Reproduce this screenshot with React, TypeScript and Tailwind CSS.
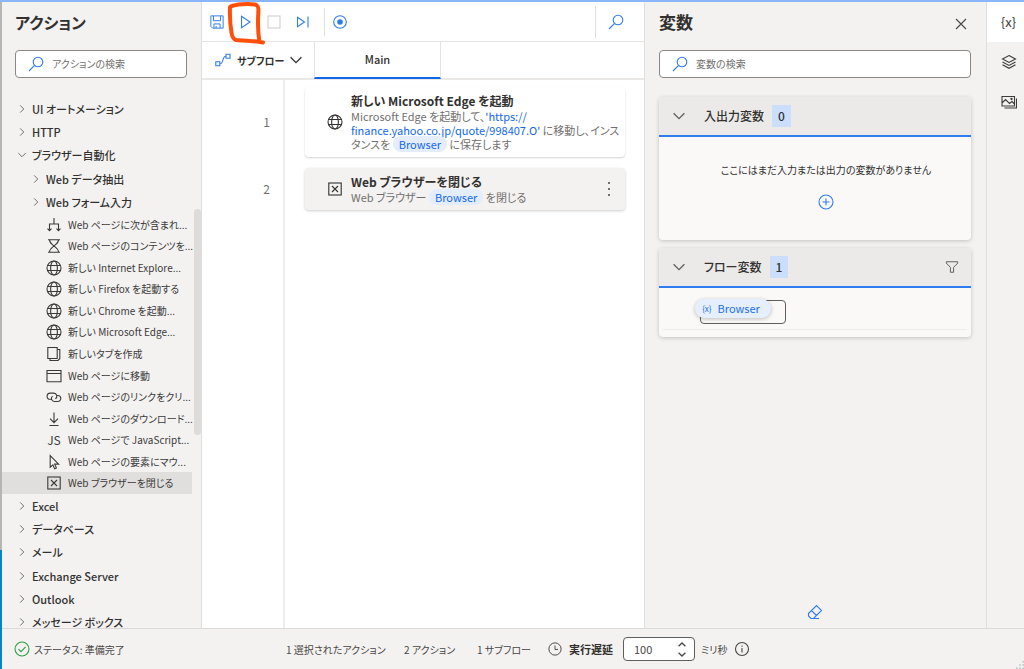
import { useState } from 'react';
import type { ReactNode } from 'react';

type IconProps = { className?: string };

const svgBase = {
  fill: 'none',
  stroke: 'currentColor',
  strokeWidth: 1.1,
  viewBox: '0 0 16 16',
  'aria-hidden': true,
} as const;

const GlobeIcon = ({ className = 'size-4' }: IconProps) => (
  <svg {...svgBase} className={className}>
    <circle cx="8" cy="8" r="7" />
    <ellipse cx="8" cy="8" rx="3.4" ry="7" />
    <path d="M1.6 5.5h12.8M1.6 10.5h12.8" />
  </svg>
);

const CloseBoxIcon = ({ className = 'size-4' }: IconProps) => (
  <svg {...svgBase} className={className}>
    <rect x="1.8" y="2" width="12.4" height="12" />
    <path d="M5 5l6 6M11 5l-6 6" />
  </svg>
);

const BranchIcon = () => (
  <svg {...svgBase} className="size-4">
    <path d="M8 1v6M3.5 13.500V7h9v6.500M1.500 11.700l2 2 2-2M10.500 11.700l2 2 2-2" />
  </svg>
);

const HourglassIcon = () => (
  <svg {...svgBase} className="size-4">
    <path d="M2 1.8h12M2 14.2h12M3.5 1.8c0 3.500 3 5 4.500 6.200-1.500 1.200-4.500 2.700-4.500 6.200M12.500 1.800c0 3.500-3 5-4.500 6.200 1.500 1.200 4.500 2.700 4.500 6.200" />
  </svg>
);

const TabsIcon = () => (
  <svg {...svgBase} className="size-4">
    <path d="M1.800 1.500h9.400v11H1.800zM11.200 3.500h2.600v9.200l-1.800 1.800H4v-2" />
  </svg>
);

const WindowIcon = () => (
  <svg {...svgBase} className="size-4">
    <path d="M1 2.500h14v11.200H1zM1 5.500h14" />
  </svg>
);

const LinkIcon = () => (
  <svg {...svgBase} className="size-4">
    <path d="M6 10.300H4.200a3.100 3.100 0 0 1 0-6.200h3.600a3.100 3.100 0 0 1 1.600 5.700" />
    <path d="M10.800 6.500h1a3 3 0 0 1 0 6H8.400a3 3 0 0 1-1.800-5.400" />
  </svg>
);

const DownloadIcon = () => (
  <svg {...svgBase} className="size-4">
    <path d="M8 1.500v10M4 7.700l4 4 4-4M3.500 14.500h9" />
  </svg>
);

const CursorIcon = () => (
  <svg {...svgBase} className="size-4">
    <path d="M4.200 1.500v11.700l2.700-2.400 1.700 3.900 1.800-.8-1.700-3.800h3.900z" />
  </svg>
);

const ScriptIcon = () => <span className="text-xs leading-4">JS</span>;

const Chevron = ({ open = false, className = 'size-2' }: IconProps & { open?: boolean }) => (
  <svg viewBox="0 0 10 10" fill="none" stroke="currentColor" strokeWidth="1.100" aria-hidden className={className}>
    <path d={open ? 'M.5 2.700L5 7.200l4.500-4.500' : 'M2.700.5L7.200 5 2.700 9.500'} />
  </svg>
);

const SearchIcon = ({ className = 'size-4' }: IconProps) => (
  <svg {...svgBase} className={className}>
    <circle cx="10" cy="6" r="4.800" />
    <path d="M6.600 9.400L1 15" />
  </svg>
);

type Action = { label: string; icon: ReactNode };

const actions: Action[] = [
  { label: 'Web ページに次が含まれ...', icon: <BranchIcon /> },
  { label: 'Web ページのコンテンツを...', icon: <HourglassIcon /> },
  { label: '新しい Internet Explore...', icon: <GlobeIcon /> },
  { label: '新しい Firefox を起動する', icon: <GlobeIcon /> },
  { label: '新しい Chrome を起動...', icon: <GlobeIcon /> },
  { label: '新しい Microsoft Edge...', icon: <GlobeIcon /> },
  { label: '新しいタブを作成', icon: <TabsIcon /> },
  { label: 'Web ページに移動', icon: <WindowIcon /> },
  { label: 'Web ページのリンクをクリ...', icon: <LinkIcon /> },
  { label: 'Web ページのダウンロード...', icon: <DownloadIcon /> },
  { label: 'Web ページで JavaScript...', icon: <ScriptIcon /> },
  { label: 'Web ページの要素にマウ...', icon: <CursorIcon /> },
  { label: 'Web ブラウザーを閉じる', icon: <CloseBoxIcon /> },
];

const upperGroups = [
  { label: 'UI オートメーション', open: false, nested: false },
  { label: 'HTTP', open: false, nested: false },
  { label: 'ブラウザー自動化', open: true, nested: false },
  { label: 'Web データ抽出', open: false, nested: true },
  { label: 'Web フォーム入力', open: false, nested: true },
];

const lowerGroups = ['Excel', 'データベース', 'メール', 'Exchange Server', 'Outlook', 'メッセージ ボックス'];

function GroupRow({ label, open = false, nested = false }: { label: string; open?: boolean; nested?: boolean }) {
  return (
    <li className={nested ? 'flex items-center pl-[30px]' : 'flex items-center pl-4'}>
      <button type="button" aria-expanded={open} className="flex items-center gap-1.5 whitespace-nowrap text-[11px] leading-4 font-medium">
        <span className="flex w-2 justify-center text-[#605e5c]">
          <Chevron open={open} />
        </span>
        {label}
      </button>
    </li>
  );
}

function SearchField({ id, label }: { id: string; label: string }) {
  return (
    <div className="flex h-7 items-center gap-2 rounded-sm border border-[#8a8886] bg-white pl-3">
      <label htmlFor={id} aria-label={label} className="shrink-0 text-[#2f7bf0]">
        <SearchIcon />
      </label>
      <input
        id={id}
        type="search"
        placeholder={label}
        className="min-w-0 flex-1 bg-transparent text-[10px] leading-4 outline-none placeholder:text-[#72706e]"
      />
    </div>
  );
}

function ActionsPanel() {
  return (
    <aside className="relative flex w-[200px] shrink-0 flex-col overflow-hidden border-r border-[#e1dfdd]">
      <div className="pt-1.5 pr-3.5 pb-[19px] pl-[13px]">
        <h2 className="mb-3.5 text-base leading-7 font-semibold">アクション</h2>
        <SearchField id="action-search" label="アクションの検索" />
      </div>
      <nav aria-label="アクション" className="shrink-0">
        <ul className="grid h-[117px] auto-rows-fr">
          {upperGroups.map((g) => (
            <GroupRow key={g.label} {...g} />
          ))}
        </ul>
        <ul className="mr-[9px] grid h-[280px] auto-rows-fr grid-cols-1">
          {actions.map((a, i) => (
            <li key={a.label} className={i === actions.length - 1 ? 'flex items-center bg-[#e1dfdd] pl-11' : 'flex items-center pl-11'}>
              <button type="button" className="flex items-center gap-1.5 text-[10px] leading-4 whitespace-nowrap text-[#3b3a39]">
                <span className="flex w-4 shrink-0 justify-center">{a.icon}</span>
                {a.label}
              </button>
            </li>
          ))}
        </ul>
        <ul className="grid h-[140px] auto-rows-fr">
          {lowerGroups.map((g) => (
            <GroupRow key={g} label={g} />
          ))}
        </ul>
      </nav>
      <div className="absolute top-[207px] right-0 h-[226px] w-[7px] rounded-full bg-[#dedcda]" />
    </aside>
  );
}

function Toolbar() {
  return (
    <div className="relative flex h-10 shrink-0 items-center border-b border-[#e6e4e2] pl-[5px] text-[#2f7bf0]">
      <button type="button" aria-label="保存" className="flex w-[30px] pl-[3px]">
        <svg {...svgBase} className="size-3.5">
          <path d="M1 1h14v14H3l-2-2zM4 1v5.500h8V1M4.500 15v-4.800h7V15M7 15v-2.500" />
        </svg>
      </button>
      <button type="button" aria-label="実行" className="flex w-[28px] pl-px">
        <svg {...svgBase} className="size-4">
          <path d="M3.500 2.200L12 8l-8.500 5.800z" />
        </svg>
      </button>
      <button type="button" aria-label="停止" disabled className="flex w-[29px] pl-px text-[#d2d0ce]">
        <svg {...svgBase} className="size-4">
          <rect x="2" y="2" width="12" height="12" />
        </svg>
      </button>
      <button type="button" aria-label="次のアクションを実行" className="flex w-[30px] pl-px">
        <svg {...svgBase} className="size-4">
          <path d="M2.500 3.200L9.500 8l-7 4.800zM13 2.500v11" />
        </svg>
      </button>
      <span className="h-7 w-px bg-[#e1dfdd]" />
      <button type="button" aria-label="レコーダー" className="ml-[7px] flex">
        <svg {...svgBase} className="size-4">
          <circle cx="8" cy="8" r="6.300" />
          <circle cx="8" cy="8" r="2.800" fill="currentColor" stroke="none" />
        </svg>
      </button>
      <span className="ml-auto h-8 w-px bg-[#e1dfdd]" />
      <button type="button" aria-label="フロー内を検索" className="flex w-12 justify-center pr-2">
        <SearchIcon />
      </button>
      <svg viewBox="0 0 42 46" fill="none" aria-hidden className="pointer-events-none absolute top-0 left-6 h-[46px] w-[42px]">
        <path
          d="M4 5c-.3 8 0 17 1.500 26 .6 3.600 1.500 6 4.500 7 7 .6 17 .6 27 2.500M4.500 4.500C10 2 22 1.500 29 2.500c3 .8 3.600 2.500 3.400 7-.6 9-.6 21 1 30"
          stroke="#ff4f0a"
          strokeWidth="4"
          strokeLinecap="round"
          strokeLinejoin="round"
        />
      </svg>
    </div>
  );
}

function Pill({ children }: { children: ReactNode }) {
  return <span className="rounded-full bg-[#e3edfd] px-1.5 text-[#1267f2]">{children}</span>;
}

function FlowCard({ icon, title, selected = false, children }: { icon: ReactNode; title: string; selected?: boolean; children: ReactNode }) {
  return (
    <article
      className={
        selected
          ? 'flex flex-1 items-center rounded-sm bg-[#f3f2f1] pl-[22px] shadow-[0_1px_3px_rgba(0,0,0,0.200)]'
          : 'flex flex-1 items-center rounded-sm bg-white pl-[22px] shadow-[0_1px_2px_rgba(0,0,0,0.180)]'
      }
    >
      <span className="shrink-0">{icon}</span>
      <div className="min-w-0 flex-1 pl-2">
        <h3 className="text-xs leading-4 font-semibold">{title}</h3>
        <p className="text-[11px] leading-[14px] text-[#72706e]">{children}</p>
      </div>
      {selected && (
        <button type="button" aria-label="その他の操作" className="flex w-8 shrink-0 justify-center">
          <svg viewBox="0 0 16 16" fill="currentColor" aria-hidden className="size-4 text-[#484644]">
            <circle cx="8" cy="2" r="1" />
            <circle cx="8" cy="8" r="1" />
            <circle cx="8" cy="14" r="1" />
          </svg>
        </button>
      )}
    </article>
  );
}

function FlowEditor() {
  return (
    <main className="flex min-w-0 flex-1 flex-col bg-white">
      <Toolbar />
      <div className="flex h-[38px] shrink-0 border-b-2 border-[#ebe9e8]">
        <button type="button" className="flex w-28 shrink-0 items-center gap-1.5 pl-[13px] text-[10px] font-semibold whitespace-nowrap">
          <svg {...svgBase} className="size-4 shrink-0 text-[#2f7bf0]">
            <path d="M.8 9.800h4v4h-4zM11 2.200h4v4h-4zM4.800 11.800c4.500 0 1.700-7.600 6.200-7.600" />
          </svg>
          サブフロー
          <Chevron open className="mr-3 ml-auto size-3 shrink-0" />
        </button>
        <button type="button" className="-mb-px w-[127px] border-x border-b-2 border-x-[#e6e4e2] border-b-[#1267e8] text-[11px] font-medium">
          Main
        </button>
      </div>
      <div className="flex min-h-0 flex-1">
        <div className="flex w-[83px] shrink-0 flex-col gap-[11px] border-r-2 border-[#eeedec] pt-[7px] text-right text-xs text-[#72706e]">
          <span className="flex h-[70px] items-center justify-end pr-[13px]">1</span>
          <span className="flex h-[42px] items-center justify-end pr-[13px]">2</span>
        </div>
        <div className="flex min-w-0 flex-1 flex-col gap-[11px] pt-[7px] pr-[19px] pl-5">
          <div className="flex h-[70px]">
            <FlowCard icon={<GlobeIcon />} title="新しい Microsoft Edge を起動">
              Microsoft Edge を起動して、<span className="text-[#1267f2]">'https://<br />finance.yahoo.co.jp/quote/998407.O'</span> に移動し、インス
              <br />
              タンスを <Pill>Browser</Pill> に保存します
            </FlowCard>
          </div>
          <div className="flex h-[42px]">
            <FlowCard icon={<CloseBoxIcon />} title="Web ブラウザーを閉じる" selected>
              Web ブラウザー <Pill>Browser</Pill> を閉じる
            </FlowCard>
          </div>
        </div>
      </div>
    </main>
  );
}

function VariableSection({ title, count, filter = false, children }: { title: string; count: number; filter?: boolean; children: ReactNode }) {
  return (
    <section className="overflow-hidden rounded bg-[#faf9f8] shadow-[0_1px_4px_rgba(0,0,0,0.200)]">
      <header className="flex h-10 items-center border-b-2 border-[#2f7bf0] bg-[#ebeae8] pr-3 pl-3.5">
        <button type="button" aria-label={title} aria-expanded className="flex text-[#605e5c]">
          <Chevron open className="size-3" />
        </button>
        <h3 className="ml-[19px] text-xs font-medium">{title}</h3>
        <span className="ml-2 flex h-[22px] items-center bg-[#cbdffd] px-1.5 text-xs font-medium">{count}</span>
        {filter && (
          <button type="button" aria-label="フィルター" className="ml-auto flex text-[#605e5c]">
            <svg {...svgBase} className="size-3.5">
              <path d="M1.500 2h13v1.500L9.800 8.500V14H6.200V8.500L1.500 3.500z" />
            </svg>
          </button>
        )}
      </header>
      {children}
    </section>
  );
}

function VariablesPanel() {
  return (
    <aside className="flex w-[343px] shrink-0 flex-col border-x border-[#e1dfdd] pr-[15px] pl-3.5">
      <div className="flex items-center justify-between pt-1.5 pb-3.5">
        <h2 className="text-[17px] leading-7 font-semibold">変数</h2>
        <button type="button" aria-label="閉じる" className="mr-1 flex pt-1 text-[#484644]">
          <svg viewBox="0 0 12 12" fill="none" stroke="currentColor" strokeWidth="1.100" aria-hidden className="size-3">
            <path d="M1 1l10 10M11 1L1 11" />
          </svg>
        </button>
      </div>
      <SearchField id="variable-search" label="変数の検索" />
      <div className="mt-[19px] flex flex-col gap-2">
        <VariableSection title="入出力変数" count={0}>
          <div className="flex h-[103px] flex-col items-center gap-4 pt-[25px] pl-[22px]">
            <p className="text-[10px] leading-4">ここにはまだ入力または出力の変数がありません</p>
            <button type="button" aria-label="変数の追加" className="flex text-[#2f7bf0]">
              <svg {...svgBase} className="size-4">
                <circle cx="8" cy="8" r="7" />
                <path d="M8 4.500v7M4.500 8h7" />
              </svg>
            </button>
          </div>
        </VariableSection>
        <VariableSection title="フロー変数" count={1} filter>
          <div className="mx-1 h-[42px] border-b border-[#efedec] pt-3 pl-[37px]">
            <div className="relative h-6 w-[86px] rounded-sm border border-[#605e5c]">
              <button
                type="button"
                className="absolute -top-0.5 -left-1.5 flex h-[19px] w-[76px] items-center justify-center gap-1.5 rounded-full bg-[#e5effe] pr-1 text-[11px] text-[#1f6fee] shadow-[0_1px_4px_rgba(0,0,0,0.250)]"
              >
                <span className="text-[8px]">{'{x}'}</span>
                Browser
              </button>
            </div>
          </div>
          <div className="h-[7px]" />
        </VariableSection>
      </div>
      <button type="button" aria-label="選択解除" className="mt-auto mb-2 flex self-center text-[#2f7bf0]">
        <svg {...svgBase} className="size-4">
          <path d="M1.500 9.500L9.500 1.500l5 5-8 8h-2.500l-2.500-2.500zM4.500 6.500l5 5M4 14.500h8" />
        </svg>
      </button>
    </aside>
  );
}

function SideRail() {
  return (
    <nav aria-label="ペイン" className="flex w-[37px] shrink-0 flex-col text-[#3b3a39]">
      <button type="button" aria-label="変数" className="flex h-10 items-center justify-center bg-white pl-1.5 text-[13px]">
        {'{x}'}
      </button>
      <button type="button" aria-label="UI 要素" className="flex h-10 items-center justify-center pl-1.5">
        <svg {...svgBase} className="size-4">
          <path d="M8 1.500l6.500 3.500L8 8.500 1.500 5zM1.500 8L8 11.500 14.500 8M1.500 10.800L8 14.300l6.500-3.500" />
        </svg>
      </button>
      <button type="button" aria-label="画像" className="flex h-10 items-center justify-center pl-1.5">
        <svg {...svgBase} className="size-4">
          <path d="M1 2.500h12.500v9.500H1zM1 9l3.500-3.500L8.500 9.500l2.500-2 2.500 2.500M3.500 14h12V4.500" />
          <circle cx="10.500" cy="5" r=".6" />
        </svg>
      </button>
    </nav>
  );
}

function StatusBar() {
  const [delay, setDelay] = useState(100);
  return (
    <footer className="flex h-[41px] shrink-0 items-center border-t border-[#dcdad8] text-[10px] whitespace-nowrap text-[#484644]">
      <div className="flex w-[284px] items-center gap-1 pl-3">
        <svg {...svgBase} className="size-4 text-[#2f9e44]">
          <circle cx="8" cy="8" r="7" />
          <path d="M4.500 8.200l2.500 2.500 4.600-4.800" />
        </svg>
        ステータス: 準備完了
      </div>
      <span className="w-[118px]">1 選択されたアクション</span>
      <span className="w-[73px]">2 アクション</span>
      <span className="w-[71px]">1 サブフロー</span>
      <svg {...svgBase} className="size-3.5">
        <circle cx="8" cy="8" r="7" />
        <path d="M8 4v4.500h3.500" />
      </svg>
      <label htmlFor="delay" className="w-[61px] pl-[7px] text-[11px] font-semibold text-[#323130]">
        実行遅延
      </label>
      <div className="flex h-6 w-[72px] items-center rounded-sm border border-[#605e5c] bg-white pr-1 text-[11px]">
        <input
          id="delay"
          type="number"
          value={delay}
          onChange={(e) => setDelay(Number(e.target.value))}
          className="w-0 min-w-0 flex-1 [appearance:textfield] bg-transparent pl-2.5 outline-none [&::-webkit-inner-spin-button]:appearance-none"
        />
        <div className="flex flex-col gap-0.5">
          <button type="button" aria-label="増やす" onClick={() => setDelay(delay + 100)} className="flex h-2 w-4 items-center justify-center">
            <svg viewBox="0 0 8 5" fill="none" stroke="currentColor" strokeWidth="1.300" aria-hidden className="h-[5px] w-2">
              <path d="M.6 4.300L4 1l3.400 3.300" />
            </svg>
          </button>
          <button type="button" aria-label="減らす" onClick={() => setDelay(Math.max(0, delay - 100))} className="flex h-2 w-4 items-center justify-center">
            <svg viewBox="0 0 8 5" fill="none" stroke="currentColor" strokeWidth="1.300" aria-hidden className="h-[5px] w-2">
              <path d="M.6.700L4 4 7.400.700" />
            </svg>
          </button>
        </div>
      </div>
      <span className="w-[39px] pl-1.5">ミリ秒</span>
      <svg {...svgBase} className="size-4">
        <circle cx="8" cy="8" r="6.500" />
        <path d="M8 7v4.500M8 4.500v1.300" />
      </svg>
      <svg viewBox="0 0 10 10" fill="#b9c0cc" aria-hidden className="mt-auto ml-auto size-2">
        <path d="M8 0h2v2H8zM4 4h2v2H4zM8 4h2v2H8zM0 8h2v2H0zM4 8h2v2H4zM8 8h2v2H8z" />
      </svg>
    </footer>
  );
}

export default function App() {
  return (
    <div className="flex h-screen flex-col bg-[#f3f2f1] font-['Noto_Sans_CJK_JP',sans-serif] text-[#323130] [font-feature-settings:'palt']">
      <div className="h-0.5 shrink-0 bg-[#8ab6f9]" />
      <div className="flex min-h-0 flex-1">
        <div className="flex w-0.5 shrink-0 flex-col bg-[#b5b5b5]">
          <div className="mt-auto h-[119px] bg-[#0a84c4]" />
        </div>
        <div className="flex min-w-0 flex-1 flex-col">
          <div className="flex min-h-0 flex-1">
            <ActionsPanel />
            <FlowEditor />
            <VariablesPanel />
            <SideRail />
          </div>
          <StatusBar />
        </div>
      </div>
    </div>
  );
}
